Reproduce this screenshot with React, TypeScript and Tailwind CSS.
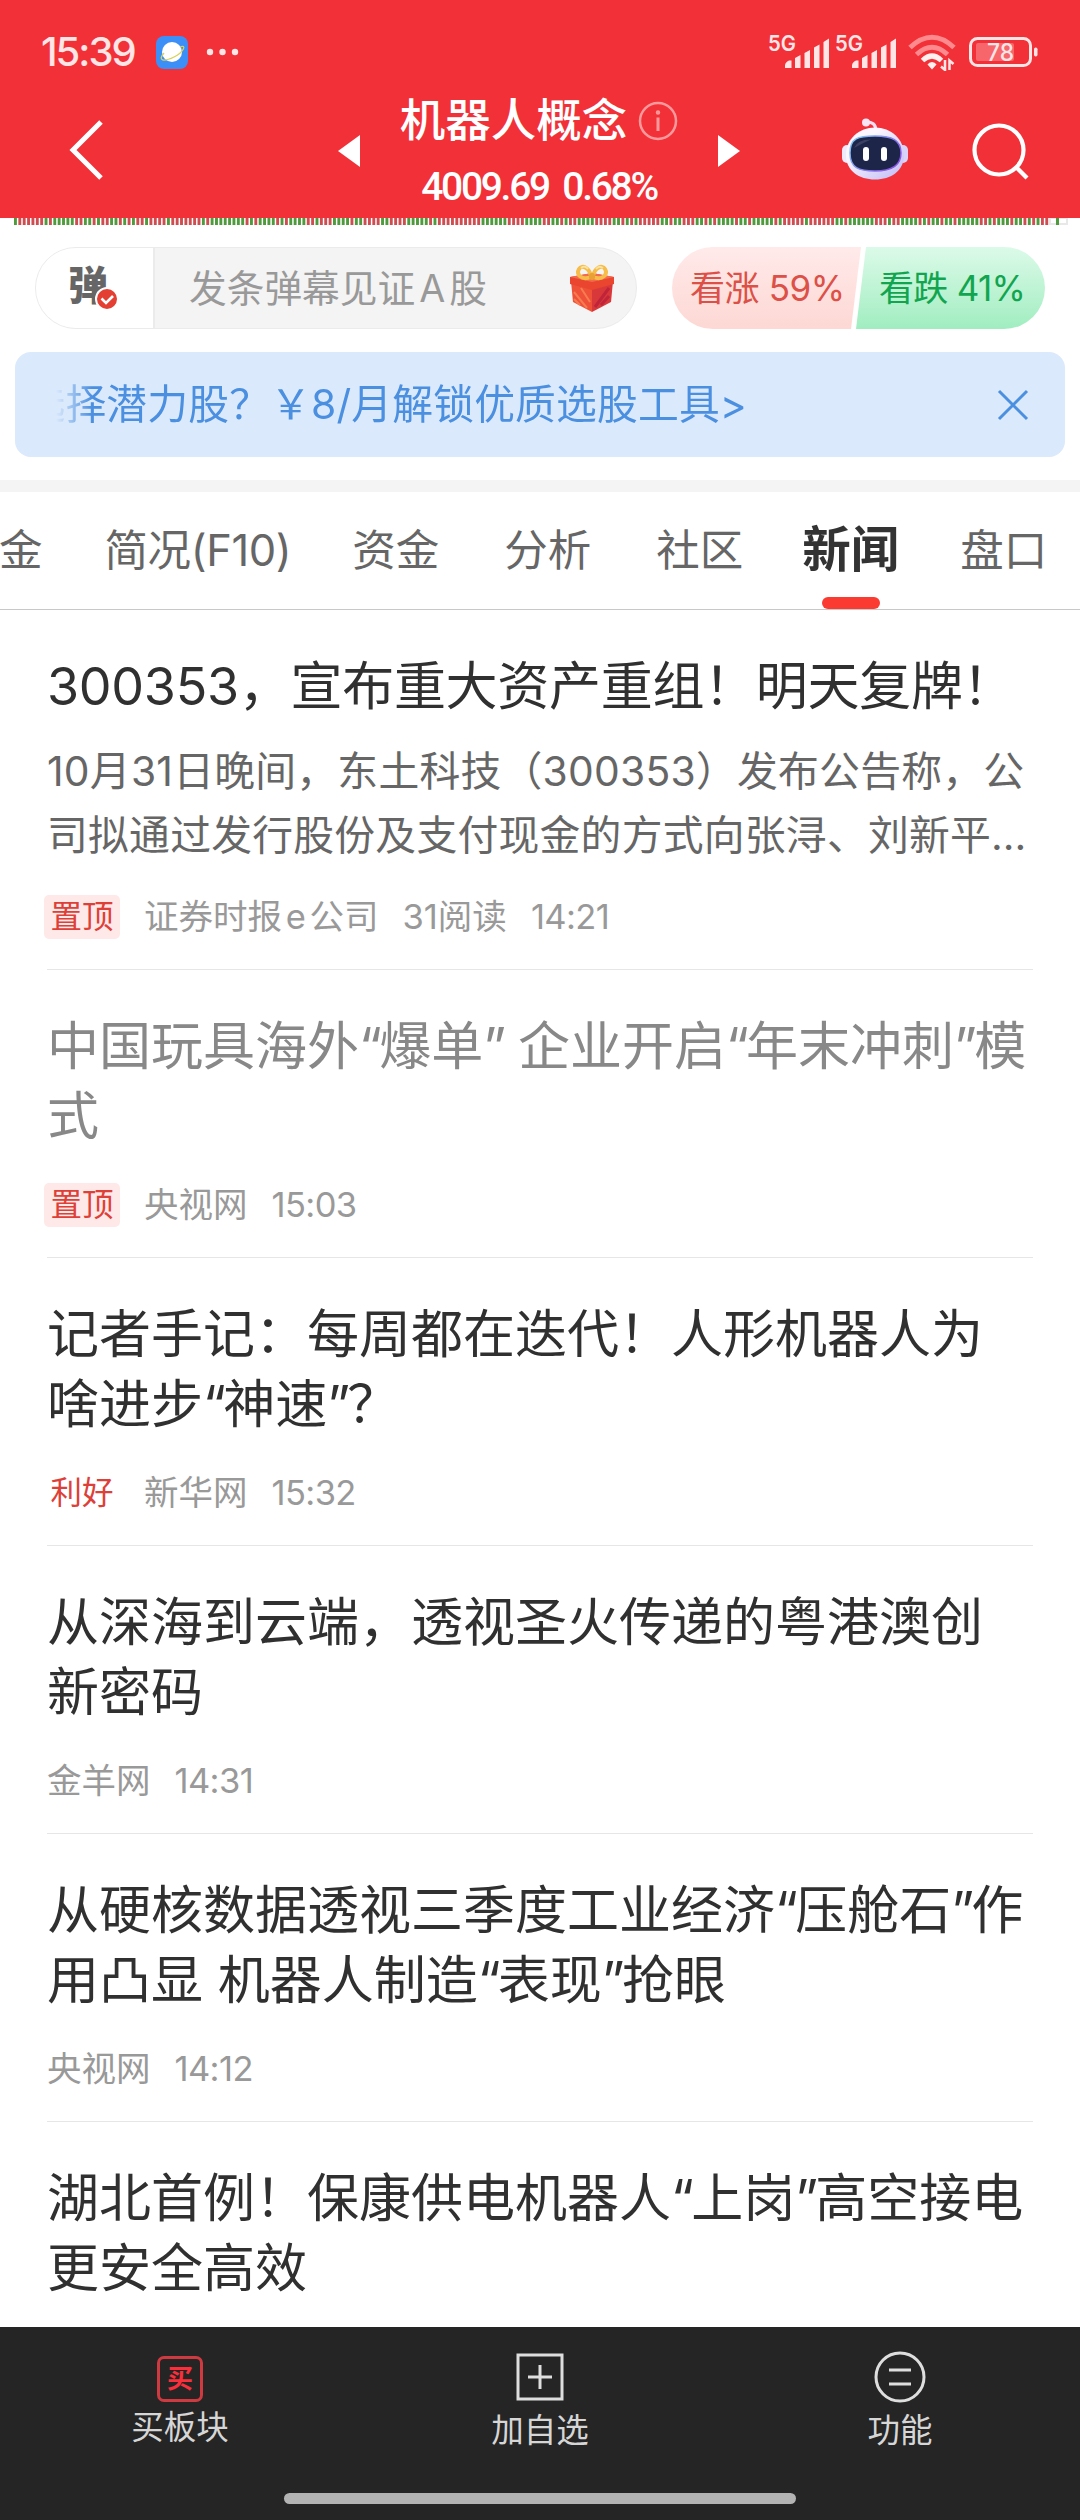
import { Fragment } from 'react';

type NewsItem = {
  title: string[];
  summary?: string[];
  tag?: { label: string; pinned: boolean };
  source?: string;
  reads?: string;
  time?: string;
  read?: boolean;
};

const news: NewsItem[] = [
  {
    title: ['300353，宣布重大资产重组！明天复牌！'],
    summary: ['10月31日晚间，东土科技（300353）发布公告称，公', '司拟通过发行股份及支付现金的方式向张浔、刘新平…'],
    tag: { label: '置顶', pinned: true },
    source: '证券时报 e 公司',
    reads: '31阅读',
    time: '14:21',
  },
  {
    title: ['中国玩具海外“爆单” 企业开启“年末冲刺”模', '式'],
    tag: { label: '置顶', pinned: true },
    source: '央视网',
    time: '15:03',
    read: true,
  },
  {
    title: ['记者手记：每周都在迭代！人形机器人为', '啥进步“神速”？'],
    tag: { label: '利好', pinned: false },
    source: '新华网',
    time: '15:32',
  },
  {
    title: ['从深海到云端，透视圣火传递的粤港澳创', '新密码'],
    source: '金羊网',
    time: '14:31',
  },
  {
    title: ['从硬核数据透视三季度工业经济“压舱石”作', '用凸显 机器人制造“表现”抢眼'],
    source: '央视网',
    time: '14:12',
  },
  {
    title: ['湖北首例！保康供电机器人“上岗”高空接电', '更安全高效'],
  },
];

// run lengths, alternating green / red
const runs = [
  1, 6, 1, 1, 5, 2, 2, 1, 1, 2, 2, 1, 1, 1, 1, 2, 1, 4, 1, 7, 1, 1, 8, 1, 1, 1, 4, 1, 1, 1, 4, 2, 1, 3, 4, 1, 2, 4, 2, 4, 5,
  1, 1, 10, 6, 4, 4, 2, 2, 1, 1, 2, 4, 4, 2, 1, 1, 1, 1, 5, 2, 1, 2, 3, 2, 1, 1, 1, 4, 1, 2, 1, 5, 1, 1, 5, 1, 6, 2, 1, 6, 3,
  1, 2, 4, 1, 1, 1, 2, 1, 2, 1, 5, 2, 1, 1, 3, 1, 2, 1, 1, 1, 1, 2,
];
const ticks = runs.flatMap((n, i) => Array(n).fill(i % 2 === 0 ? '#4f9a3d' : '#cf4d50') as string[]).slice(0, 238);

function Signal() {
  return (
    <svg className="overflow-visible" width="67" height="36" viewBox="0 0 67 36" fill="#ffe5e6">
      <text x="-2" y="17" fontSize="22" fontWeight="600" textLength="28" lengthAdjust="spacingAndGlyphs" className="font-['Inter',sans-serif]">5G</text>
      <path d="M15 31.500q0-3 4-5h2.500v7.500h-6.500zM25 24l5.500-3v13H25zM34.500 19l5.500-3v18h-5.500zM44 13.500l5.500-3V34H44zM53.500 8l5.500-3.500V34h-5.500z" />
    </svg>
  );
}

function StatusBar() {
  return (
    <div className="flex h-[104px] items-center pl-[41px] pr-[41px]">
      <span className="w-[96px] whitespace-nowrap text-[40px] font-medium leading-none tracking-[-2px] text-[#ffe5e6]">15:39</span>
      <svg className="ml-[19px]" width="32" height="33" viewBox="0 0 32 33">
        <rect width="32" height="33" rx="8" fill="#3d8ff8" />
        <circle cx="16" cy="16" r="10" fill="#fff" />
        <path d="M8 17C1 25 8 26 18 21S31 8 24 11" fill="none" stroke="#d9d25a" strokeWidth="1.300" />
      </svg>
      <svg className="ml-[18px]" width="34" height="8" viewBox="0 0 34 8" fill="#ffe5e6">
        <circle cx="4" cy="4" r="3.200" />
        <circle cx="16.500" cy="4" r="3.200" />
        <circle cx="29" cy="4" r="3.200" />
      </svg>
      <div className="ml-auto flex items-center">
        <Signal />
        <Signal />
        <svg className="ml-1" width="50" height="38" viewBox="0 0 50 38" fill="none" strokeWidth="5">
          <path d="M2 14.500Q24-6 46 14.500" stroke="#ff8a8e" />
          <path d="M8.500 21.500Q24 7 39.500 21.500" stroke="#ff8a8e" />
          <path d="M14.500 27.500Q24 18.500 33.500 27.500" stroke="#fff0f0" />
          <path d="M24 29q3 0 4.500 2.500L24 36.500l-4.500-5Q21 29 24 29z" fill="#fff0f0" />
          <path d="M37 27v10l-4-3.500M41.500 37V27.500l4 3.500" stroke="#ffe5e6" strokeWidth="2.500" />
        </svg>
        <svg className="ml-[11px]" width="70" height="32" viewBox="0 0 70 32">
          <rect x="1.500" y="2.500" width="60" height="27" rx="7" fill="none" stroke="#ffe5e6" strokeWidth="3" />
          <rect x="7" y="7" width="38" height="18" rx="2" fill="#f6666b" />
          <rect x="65" y="11.500" width="3.500" height="9" rx="1.700" fill="#ffe5e6" />
          <text x="18" y="25" fontSize="24" fontWeight="500" fill="#ffe5e6" textLength="27" lengthAdjust="spacingAndGlyphs" className="font-['Inter',sans-serif]">78</text>
        </svg>
      </div>
    </div>
  );
}

function RobotIcon() {
  return (
    <svg width="68" height="64" viewBox="0 0 68 64">
      <defs>
        <linearGradient id="shell" x1="0" y1="0" x2="1" y2="1">
          <stop offset="0.300" stopColor="#fbf6ff" />
          <stop offset="1" stopColor="#bdb9f4" />
        </linearGradient>
        <linearGradient id="rim" x1="0" y1="0" x2="1" y2="0.600">
          <stop offset="0" stopColor="#7fd0f5" />
          <stop offset="1" stopColor="#8a55e8" />
        </linearGradient>
      </defs>
      <path d="M24 4Q35 3 35 13" fill="none" stroke="#f3dff3" strokeWidth="3" />
      <circle cx="25" cy="4.500" r="4" fill="#f7e4f4" />
      <rect x="1" y="27" width="10" height="18" rx="5" fill="#eeeafb" />
      <rect x="57" y="27" width="10" height="18" rx="5" fill="#d8d3fa" />
      <path d="M34 9.500C50 9.500 63 21 63 37C63 53 50 61.500 34 61.500S5 53 5 37C5 21 18 9.500 34 9.500z" fill="url(#shell)" />
      <path d="M34 18C51 18 60 22 60 35S50 53 34 53S9 50 9 35S17 18 34 18z" fill="#1d2549" stroke="url(#rim)" strokeWidth="1.500" />
      <path d="M13 30Q17 21 30 21.500Q22 25 13 30z" fill="#3a4163" />
      <rect x="22" y="29" width="6" height="14" rx="3" fill="#fff" />
      <rect x="40" y="29" width="6" height="14" rx="3" fill="#fff" />
    </svg>
  );
}

function Header() {
  return (
    <header className="h-[218px] bg-[#f23038] text-white">
      <StatusBar />
      <div className="flex h-[114px] items-start pl-[68px] pr-[49px]">
        <svg className="mt-3.5" width="38" height="64" viewBox="0 0 38 64" fill="none" stroke="#fff" strokeWidth="5">
          <path d="M33 4L5 32L33 60" />
        </svg>
        <svg className="ml-[232px] mt-[31px]" width="22" height="32" viewBox="0 0 22 32" fill="#fff">
          <path d="M22 0V32L0 16z" />
        </svg>
        <div className="flex w-[358px] flex-col items-center">
          <div className="flex h-[34px] items-center">
            <span className="whitespace-nowrap text-[45.500px] font-medium leading-none">机器人概念</span>
            <svg className="ml-[11px]" width="40" height="40" viewBox="0 0 40 40" fill="none" stroke="#ff999c" strokeWidth="2.500">
              <circle cx="20" cy="20" r="18" />
              <path d="M20 16.500V30" strokeWidth="3" />
              <circle cx="20" cy="11.500" r="1" />
            </svg>
          </div>
          <span className="mt-[25px] whitespace-pre font-['Roboto',sans-serif] text-[39px] font-medium leading-[48px] tracking-[-2.3px] [word-spacing:6px]">4009.69 0.68%</span>
        </div>
        <svg className="mt-[31px]" width="22" height="32" viewBox="0 0 22 32" fill="#fff">
          <path d="M0 0V32L22 16z" />
        </svg>
        <div className="ml-auto mt-[14px] flex items-start">
          <RobotIcon />
          <svg className="ml-[62px] mt-[4px]" width="60" height="60" viewBox="0 0 60 60" fill="none" stroke="#fff" strokeWidth="4.200">
            <circle cx="28" cy="28" r="24.500" />
            <path d="M45 45L56 56" />
          </svg>
        </div>
      </div>
    </header>
  );
}

function TickStrip() {
  return (
    <svg className="block shrink-0" width="1080" height="7" viewBox="0 0 1080 7">
      <rect x="1050" y="0" width="17" height="6" fill="none" stroke="#e8e8e8" strokeWidth="2" />
      {ticks.map((color, i) => (
        <rect key={i} x={14 + i * 4.37} y="0" width="2.900" height="7" fill={color} />
      ))}
      <rect x="1056" y="0" width="3" height="7" fill="#4f9a3d" />
    </svg>
  );
}

function GiftIcon() {
  return (
    <svg width="46" height="48" viewBox="0 0 46 48">
      <path d="M2 17L23 22V48L4 38z" fill="#ee5138" />
      <path d="M44 17L23 22V48L42 38z" fill="#d9383a" />
      <path d="M5 28L18 44M5 35L11 41M12 24L21 38" stroke="#f77b50" strokeWidth="2" />
      <path d="M40 24L26 43M40 32L32 41" stroke="#bf2439" strokeWidth="3" />
      <path d="M1 13L23 9L45 13V20L23 26L1 20z" fill="#e9452f" />
      <path d="M1 13L23 9L45 13L23 18z" fill="#f46a4c" />
      <path d="M22 13C12 17 7 10 10 5S21 4 22 13zM24 13C34 17 39 10 36 5S25 4 24 13z" fill="none" stroke="#f6bd4b" strokeWidth="4" />
      <path d="M12 4Q16 1 19 5M34 4Q30 1 27 5" fill="none" stroke="#fde39a" strokeWidth="1.800" />
      <rect x="20" y="9" width="6" height="7" rx="3" fill="#e9a034" />
    </svg>
  );
}

function DanmuRow() {
  return (
    <div className="mt-[22px] flex h-[82px] shrink-0 items-center pl-[35px] pr-[35px]">
      <div className="flex h-full w-[602px] overflow-hidden rounded-full border border-[#ebebeb] bg-[#f4f4f4]">
        <div className="relative flex w-[119px] shrink-0 items-center border-r-2 border-[#ebebeb] bg-white pl-[32px] text-[40px] font-black leading-none text-[#666]">
          <span className="-mt-1">弹</span>
          <svg className="absolute left-[59px] top-[39px]" width="24" height="24" viewBox="0 0 24 24">
            <circle cx="12" cy="12" r="11" fill="#e43f33" stroke="#fff" strokeWidth="2" />
            <path d="M6.500 11.500L11 16L18 9" fill="none" stroke="#fff" strokeWidth="2.600" />
          </svg>
        </div>
        <span className="ml-[34px] flex items-center whitespace-nowrap text-[37.700px] text-[#999]">
          发条弹幕见证<span className="mx-[4px]">A</span>股
        </span>
        <span className="ml-auto mr-[21px] flex items-center">
          <GiftIcon />
        </span>
      </div>
      <div className="ml-auto flex h-full w-[373px] overflow-hidden rounded-full text-[35px]">
        <div className="flex w-[189px] shrink-0 items-center whitespace-pre bg-gradient-to-b from-[#ffeaea] to-[#fdd8d4] pl-[18px] tracking-[-0.4px] text-[#dc5047] [clip-path:polygon(0_0,100%_0,179px_100%,0_100%)]">
          看涨 59%
        </div>
        <div className="-ml-[5px] flex w-[189px] shrink-0 items-center whitespace-pre bg-gradient-to-b from-[#dcfae9] to-[#a0edc0] pl-[23px] tracking-[-0.7px] text-[#12a550] [clip-path:polygon(10px_0,100%_0,100%_100%,0_100%)]">
          看跌 41%
        </div>
      </div>
    </div>
  );
}

function PromoBanner() {
  return (
    <div className="mx-[15px] mt-[23px] flex h-[105px] shrink-0 items-center justify-between rounded-[16px] bg-[#dbe9fc] pl-[41px] pr-[36px] text-[#4a8fe0]">
      <div className="flex w-[691px] justify-end overflow-hidden whitespace-pre text-[40.800px] tracking-[0.15px] [mask-image:linear-gradient(to_right,transparent,#000_36px)]">
        选择潜力股？￥8/月解锁优质选股工具&gt;
      </div>
      <svg width="32" height="32" viewBox="0 0 32 32" fill="none" stroke="#4a8fe0" strokeWidth="3">
        <path d="M2 2L30 30M30 2L2 30" />
      </svg>
    </div>
  );
}

function Tabs() {
  const tab = 'flex items-center whitespace-nowrap';
  return (
    <nav className="flex h-[118px] shrink-0 overflow-hidden border-b border-[#c8c8c8] text-[43.500px] text-[#666]">
      <span className={`${tab} -ml-px`}>金</span>
      <span className={`${tab} ml-[62px] tracking-[-0.4px]`}>简况(F10)</span>
      <span className={`${tab} ml-[61px]`}>资金</span>
      <span className={`${tab} ml-[65px]`}>分析</span>
      <span className={`${tab} ml-[65px]`}>社区</span>
      <span className={`${tab} relative ml-[59px] text-[48.500px] font-semibold text-[#333]`}>
        新闻
        <i className="absolute bottom-0 left-[20px] h-[12px] w-[58px] rounded-full bg-[#fb3b31]" />
      </span>
      <span className={`${tab} ml-[61px]`}>盘口</span>
    </nav>
  );
}

// curly quotes sit tighter than the surrounding characters
function TitleLine({ text }: { text: string }) {
  return text.split(/([“”])/).map((part, i) =>
    part === '“' || part === '”' ? (
      <span key={i} className="tracking-[-2.8px]">
        {part}
      </span>
    ) : (
      part
    ),
  );
}

function NewsRow({ item }: { item: NewsItem }) {
  return (
    <article className="border-b border-[#e6e6e6] pb-[30px] pt-[42px]">
      <h2
        className={`whitespace-nowrap text-[52px] leading-[70px] ${item.read ? 'text-[#888]' : 'text-[#303030]'} ${item.summary ? 'tracking-[-0.3px]' : ''}`}
      >
        {item.title.map((line, i) => (
          <Fragment key={line}>
            {i > 0 && <br />}
            <TitleLine text={line} />
          </Fragment>
        ))}
      </h2>
      {item.summary && (
        <p className="mt-[17px] whitespace-nowrap text-[40.800px] leading-[64px] tracking-[0.25px] text-[#666]">
          {item.summary[0]}
          <br />
          {item.summary[1]}
        </p>
      )}
      <div className={`flex h-[44px] items-center gap-[24px] whitespace-pre text-[34.500px] text-[#999] ${item.summary ? 'mt-[28px]' : 'mt-[31px]'}`}>
        {item.tag && (
          <span
            className={`-ml-[3px] flex h-[44px] w-[76px] items-center justify-center rounded-[5px] text-[31.500px] text-[#dd4038] ${item.tag.pinned ? 'bg-[#ffe9e8]' : ''}`}
          >
            {item.tag.label}
          </span>
        )}
        {item.source && <span className="[word-spacing:-6px]">{item.source}</span>}
        {item.reads && <span>{item.reads}</span>}
        {item.time && <span className="tracking-[-0.6px]">{item.time}</span>}
      </div>
    </article>
  );
}

function BottomNav() {
  return (
    <footer className="h-[193px] shrink-0 bg-[#252525] text-[32.500px] leading-none text-[#d6d6d6]">
      <div className="flex h-[166px] pt-[23px]">
        <div className="flex flex-1 flex-col items-center">
          <span className="mt-[6px] flex h-[46px] w-[46px] items-center justify-center rounded-[7px] border-[3px] border-[#cf3a40] text-[26px] font-bold text-[#fb2f3b]">买</span>
          <span className="mt-[10px]">买板块</span>
        </div>
        <div className="flex flex-1 flex-col items-center">
          <svg className="mt-[3px]" width="48" height="48" viewBox="0 0 48 48" fill="none" stroke="#dedede" strokeWidth="3">
            <path d="M2 2H46V46H2zM24 12V36M12 24H36" />
          </svg>
          <span className="mt-[14px]">加自选</span>
        </div>
        <div className="flex flex-1 flex-col items-center">
          <svg width="52" height="54" viewBox="0 0 52 54" fill="none" stroke="#dedede" strokeWidth="3">
            <circle cx="26" cy="27" r="24" />
            <path d="M15 20H37M15 34H37" />
          </svg>
          <span className="mt-[11px]">功能</span>
        </div>
      </div>
      <div className="mx-auto h-[11px] w-[512px] rounded-full bg-[#b3b3b3]" />
    </footer>
  );
}

export default function App() {
  return (
    <div lang="zh-CN" className="flex h-[2520px] w-[1080px] flex-col overflow-hidden bg-white font-['Inter','Noto_Sans_CJK_SC',sans-serif]">
      <Header />
      <TickStrip />
      <DanmuRow />
      <PromoBanner />
      <div className="mt-[23px] h-[12px] shrink-0 bg-[#f4f4f4]" />
      <Tabs />
      <main className="min-h-0 flex-1 overflow-hidden px-[47px]">
        {news.map((item) => (
          <NewsRow key={item.title[0]} item={item} />
        ))}
      </main>
      <BottomNav />
    </div>
  );
}
